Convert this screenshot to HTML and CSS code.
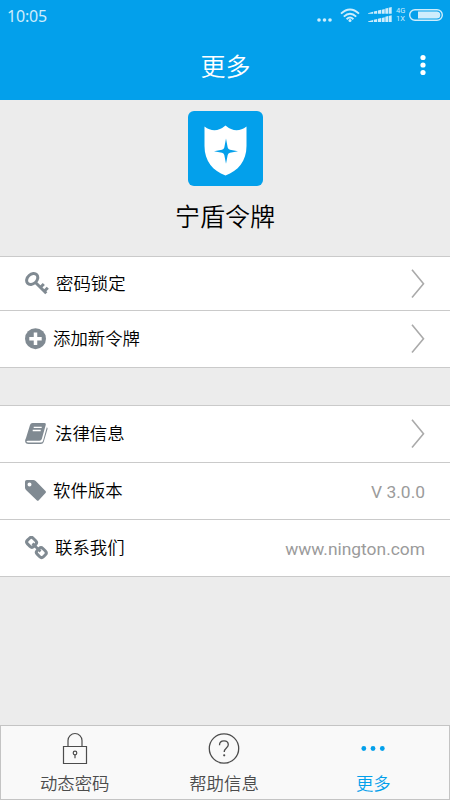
FILE: index.html
```html
<!DOCTYPE html>
<html lang="zh-CN">
<head>
<meta charset="utf-8">
<title>更多</title>
<link rel="stylesheet" href="styles.css">
</head>
<body>
<div class="screen">
  <header class="topbar">
    <div class="status">
      <span class="clock">10:05</span>
      <div class="status-icons">
        <svg class="ellipsis" width="15" height="4" viewBox="0 0 15 4"><g fill="currentColor"><circle cx="2" cy="2" r="1.8"/><circle cx="7.5" cy="2" r="1.8"/><circle cx="13" cy="2" r="1.8"/></g></svg>
        <svg class="wifi" width="20" height="15" viewBox="0 0 20 15"><g fill="none" stroke="currentColor" stroke-width="1.9"><path d="M1 5.6Q10-2.6 19 5.6"/><path d="M3.8 8.6Q10 2.8 16.2 8.6"/><path d="M6.6 11.2Q10 8 13.4 11.2"/></g><circle cx="10" cy="12.6" r="1.5" fill="currentColor"/></svg>
        <svg class="signal" width="24" height="16" viewBox="0 0 24 16"><g fill="currentColor"><path d="M0 6.8V6.200L5 4.800v2zM5.800 4.600l3.400-.8v3H5.800zM10 3.600l3.100-.8v4H10zM13.800 2.700l2.900-.7v4.800h-2.900zM17.300 1.600l2.700-.7v5.900h-2.700zM20.600.7l3.100-.7v6.800h-3.100zM0 15v-.6L5 13v2zM5.800 12.800l3.400-.8v3H5.800zM10 11.800l3.100-.8v4H10zM13.800 10.900l2.900-.7V15h-2.900zM17.300 9.800l2.700-.7V15h-2.700zM20.600 8.900l3.100-.7V15h-3.100z"/></g></svg>
        <div class="network"><span>4G</span><span>1X</span></div>
        <svg class="battery" width="34" height="12" viewBox="0 0 34 12"><rect x=".7" y=".7" width="32.6" height="10.6" rx="5.3" fill="none" stroke="currentColor" stroke-width="1.4"/><path d="M9 2.400h18.700a3.600 3.600 0 0 1 0 7.200H9z" fill="currentColor"/></svg>
      </div>
    </div>
    <div class="titlebar">
      <h1>更多</h1>
      <svg class="menu" width="6" height="22" viewBox="0 0 6 22"><g fill="#fff"><circle cx="3" cy="3.500" r="2.600"/><circle cx="3" cy="11" r="2.600"/><circle cx="3" cy="18.500" r="2.600"/></g></svg>
    </div>
  </header>

  <section class="brand">
    <svg class="logo" width="75" height="75" viewBox="0 0 75 75"><rect width="75" height="75" rx="6" fill="#03a0eb"/><path d="M16.500 15.500Q27 23.500 37.500 14.500Q48 23.500 58.500 15.500V35C58.500 50 50 60 37.500 64.500C25 60 16.500 50 16.500 35z" fill="#fff"/><path d="M38 27.500L39.700 36.500Q40.200 38.300 42 38.700L50 40.300L42 41.700Q40.200 42.200 39.700 44L38 52.800L36.300 44Q35.800 42.200 34 41.700L26 40.300L34 38.700Q35.800 38.300 36.300 36.500z" fill="#03a0eb"/></svg>
    <div class="brand-name">宁盾令牌</div>
  </section>

  <section class="group">
    <div class="row row-first">
      <svg width="24" height="24" viewBox="0 0 24 24"><g fill="none" stroke="#808a92"><ellipse cx="7.200" cy="7" rx="6.200" ry="4.700" transform="rotate(-42 7.200 7)" stroke-width="3"/><path d="M10.500 10.500 21.300 21.300M15.300 15.500l3.500-3.500M19 19.500l3.800-3.800" stroke-width="3"/></g></svg>
      <span class="label">密码锁定</span>
      <svg class="arrow" width="14" height="30" viewBox="0 0 14 30"><path d="M1 .800 12.500 14.700 1 28.500"/></svg>
    </div>
    <div class="row">
      <svg width="21" height="22" viewBox="0 0 21 22"><circle cx="10.500" cy="10.700" r="10.500" fill="#808a92"/><path d="M10.500 4.500v12.400M4.300 10.700h12.400" stroke="#fff" stroke-width="3.500"/></svg>
      <span class="label">添加新令牌</span>
      <svg class="arrow" width="14" height="30" viewBox="0 0 14 30"><path d="M1 .800 12.500 14.700 1 28.500"/></svg>
    </div>
  </section>

  <section class="group">
    <div class="row">
      <svg width="23" height="22" viewBox="0 0 23 22"><path d="M7.500 0H19.500Q21.300 0 20.800 1.800L16.800 16Q16.200 17.800 14.500 17.800H3Q1.300 17.800 1.500 18.800Q1.800 19.600 3.500 19.600H15.600Q17.500 19.600 18 18L21.800 4.200Q22.900 4.700 22.500 6L18.700 19Q18 21 15.800 21H3.500Q.2 21 .1 18Q0 17 1 15L5 2Q5.600 0 7.500 0z" fill="#808a92"/><path d="M8.700 4.300h8M7.700 7.500h8" stroke="#fff" stroke-width="1.300"/></svg>
      <span class="label">法律信息</span>
      <svg class="arrow" width="14" height="30" viewBox="0 0 14 30"><path d="M1 .800 12.500 14.700 1 28.500"/></svg>
    </div>
    <div class="row">
      <svg width="21" height="22" viewBox="0 0 21 22"><path fill-rule="evenodd" d="M1.800 0H8.200Q9.500 0 10.700 1.100L20.500 11Q21.400 12 20.500 12.900L13.800 20.300Q12.700 21.300 11.700 20.300L1.300 10.300Q0 9 0 7.800V1.800Q0 0 1.800 0zM4.500 2.400a2 2 0 1 0 0 4 2 2 0 0 0 0-4z" fill="#808a92"/></svg>
      <span class="label">软件版本</span>
      <span class="value">V 3.0.0</span>
    </div>
    <div class="row">
      <svg width="23" height="24" viewBox="0 0 23 24"><g fill="none" stroke="#808a92" stroke-width="3"><rect x="-4" y="-4.400" width="8" height="8.800" rx="2.600" transform="translate(6.600 6.300) rotate(-45)"/><rect x="-4" y="-4.400" width="8" height="8.800" rx="2.600" transform="translate(16.300 16.600) rotate(-45)"/><path d="m7.500 7.500 8 8" stroke-width="2.600"/></g></svg>
      <span class="label">联系我们</span>
      <span class="value">www.nington.com</span>
    </div>
  </section>

  <nav class="tabs">
    <div class="tab">
      <svg width="32" height="32" viewBox="0 0 32 32"><g fill="none" stroke="#4c4c4c" stroke-width="1.200"><path d="M4.500 14.500h23V31.500h-23zM9 14.500V8.500a7 7 0 0 1 14 0v6"/><circle cx="16" cy="21" r="1.800"/><path d="M16 22.800v3.500"/></g></svg>
      <span>动态密码</span>
    </div>
    <div class="tab">
      <svg width="32" height="32" viewBox="0 0 32 32"><g fill="none" stroke="#4c4c4c" stroke-width="1.300"><circle cx="16" cy="16.500" r="14.700"/><path d="M11.500 13.200C11.500 10.500 13.300 8.800 16 8.800S20.300 10.500 20.300 12.800C20.300 16 16.200 16.100 16.200 20"/></g><circle cx="16.200" cy="23.300" r="1.100" fill="#4c4c4c"/></svg>
      <span>帮助信息</span>
    </div>
    <div class="tab active">
      <svg width="32" height="32" viewBox="0 0 32 32"><g fill="#03a0eb"><circle cx="6.800" cy="16.500" r="2.400"/><circle cx="16" cy="16.500" r="2.400"/><circle cx="25.300" cy="16.500" r="2.400"/></g></svg>
      <span>更多</span>
    </div>
  </nav>
</div>
</body>
</html>
```
FILE: styles.css
```css
* { box-sizing: border-box; }
body {
  margin: 0;
  font-family: Roboto, "Noto Sans CJK SC", sans-serif;
  color: #000;
}
svg { display: block; flex: none; }
.screen {
  width: 450px;
  height: 800px;
  display: flex;
  flex-direction: column;
  background: #ececec;
  overflow: hidden;
}
.topbar { height: 100px; flex: none; background: #03a0eb; }
.status {
  height: 30px;
  padding: 0 7px;
  display: flex;
  justify-content: space-between;
  align-items: center;
  color: #ceedfc;
}
.clock {
  font: 16px/20px "Noto Sans", sans-serif;
  letter-spacing: -0.2px;
  padding-top: 2px;
}
.status-icons { display: flex; align-items: center; }
.ellipsis { margin: 9px 8px 0 0; }
.wifi { margin-right: 8px; }
.signal { margin-right: 4px; }
.network {
  width: 11px;
  margin-right: 2px;
  display: flex;
  flex-direction: column;
  font: 7.500px/8px Roboto, sans-serif;
}
.titlebar {
  height: 70px;
  padding: 0 24px;
  display: grid;
  grid-template-columns: 6px 1fr 6px;
  align-items: center;
}
h1 {
  grid-column: 2;
  margin: 5px 0 0 1px;
  text-align: center;
  color: #fff;
  font-size: 25px;
  line-height: 36px;
  font-weight: 350;
}
.brand {
  height: 156px;
  flex: none;
  padding-top: 11px;
  display: flex;
  flex-direction: column;
  align-items: center;
}
.brand-name {
  margin-top: 14px;
  font-size: 25px;
  line-height: 36px;
  font-weight: 350;
}
.group {
  flex: none;
  margin-bottom: 37px;
  background: #fff;
  border-bottom: 1px solid #cacaca;
}
.row {
  height: 57px;
  padding: 0 25px;
  display: flex;
  align-items: center;
  gap: 7px;
  border-top: 1px solid #cacaca;
}
.row-first { height: 54px; }
.label {
  font-size: 17.400px;
  line-height: 26px;
  font-weight: 350;
}
.arrow {
  margin-left: auto;
  fill: none;
  stroke: #aaa;
  stroke-width: 1.600;
}
.value {
  margin-left: auto;
  padding-top: 2px;
  font-size: 17.400px;
  line-height: 24px;
  color: #9b9b9b;
}
.tabs {
  height: 75px;
  flex: none;
  margin-top: auto;
  display: flex;
  background: #f9f9f9;
  border: 1px solid #c4c4c4;
}
.tab {
  flex: 1;
  padding: 6px 2px 0 0;
  display: flex;
  flex-direction: column;
  align-items: center;
  font-size: 17.400px;
  line-height: 26px;
  font-weight: 350;
  color: #4c4c4c;
}
.tab span { margin-top: 7px; }
.active { color: #03a0eb; }
```
